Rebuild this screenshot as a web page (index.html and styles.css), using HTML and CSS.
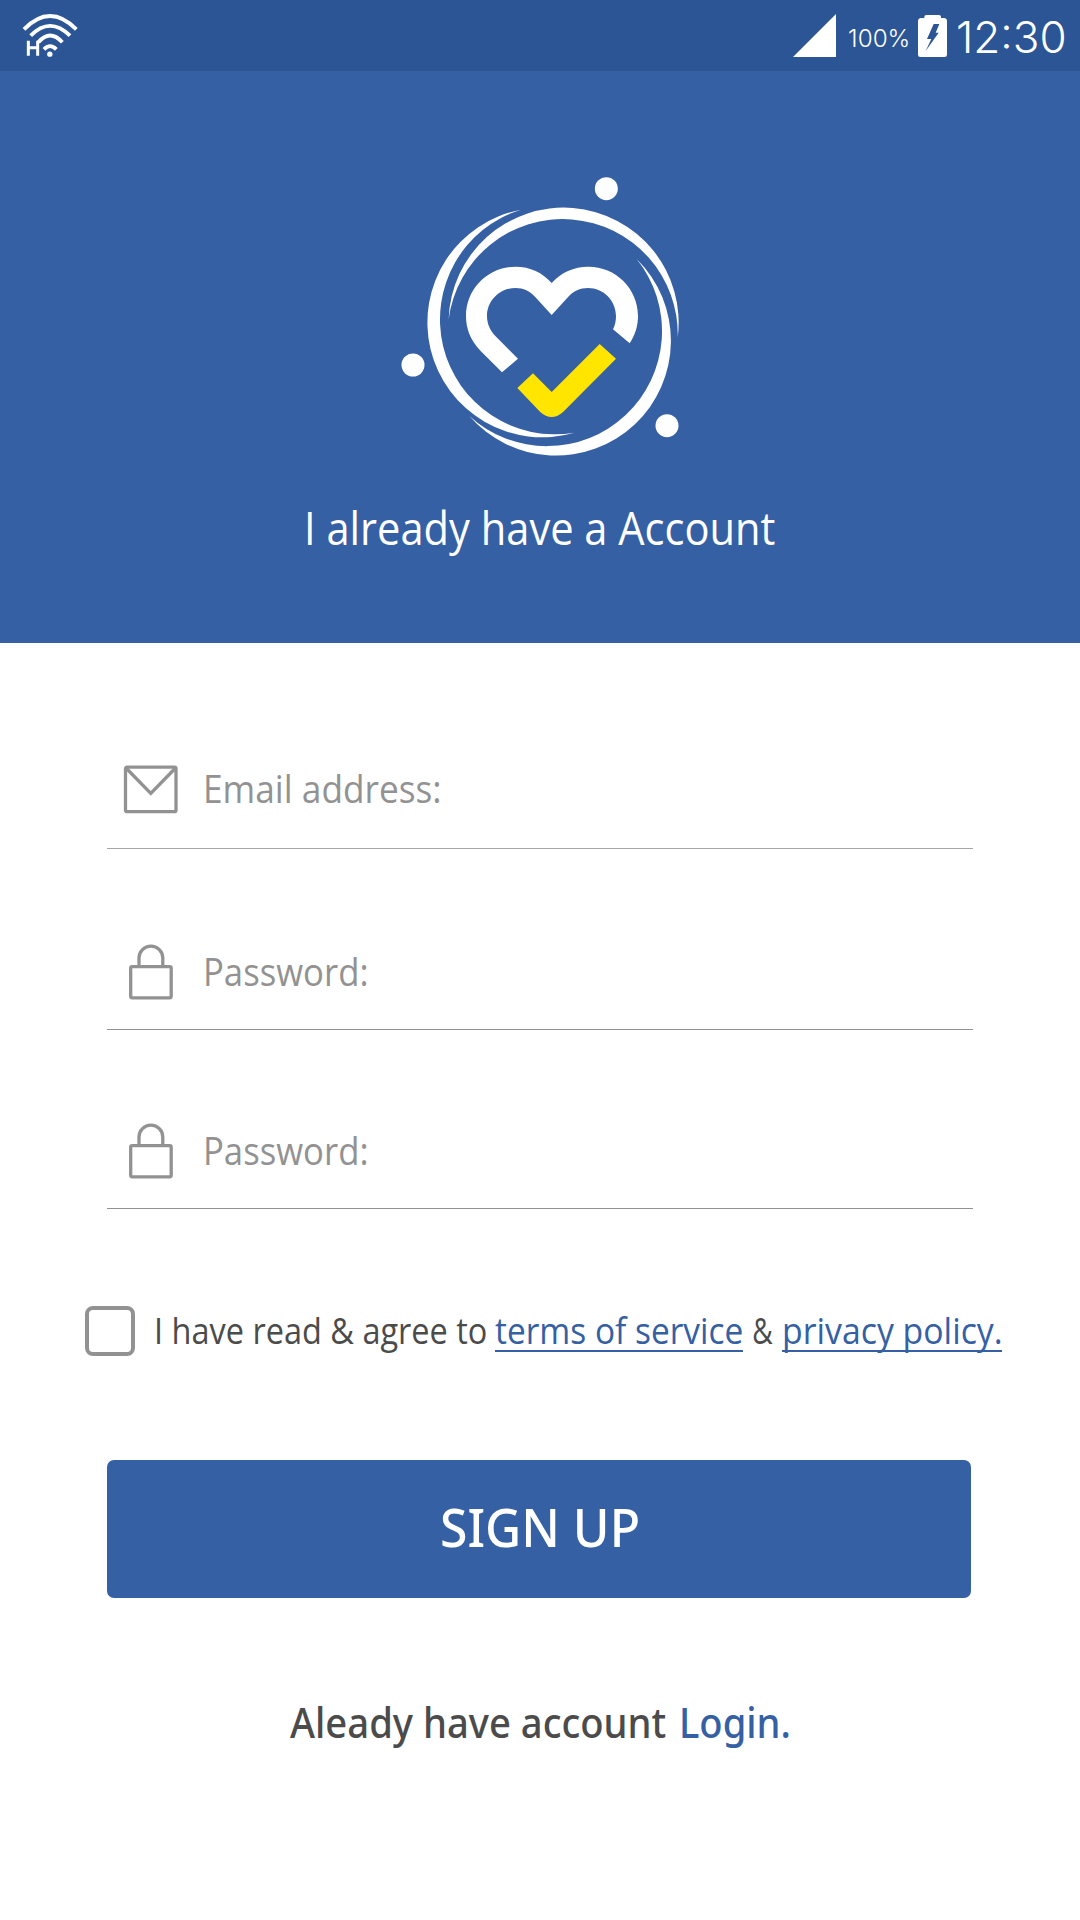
FILE: index.html
```
<!DOCTYPE html>
<html lang="en">
<head>
<meta charset="utf-8">
<title>Sign up</title>
<link rel="stylesheet" href="styles.css">
</head>
<body>
<div class="status">
  <svg class="wifi" viewBox="0 0 180 144" width="60" height="48" fill="none" stroke="#fff">
    <g stroke-width="11.5">
      <path d="M12 58Q90-22 169 58"/>
      <path d="M32 77Q90 18 150 77"/>
      <path d="M55 97Q90 56 127 97"/>
      <path d="M72 118Q90 99 109 118"/>
    </g>
    <path d="M25 92V137M53 92V137M25 113H53" stroke-width="9"/>
    <circle cx="89.500" cy="132.500" r="8" fill="#fff" stroke="none"/>
  </svg>
  <svg class="signal" viewBox="0 0 43 43" width="43" height="43"><path d="M43 0V43H0Z" fill="#fff"/></svg>
  <span class="percent fit">100%</span>
  <svg class="battery" viewBox="0 0 87 126" width="29" height="42">
    <path d="M19 9V5Q19 0 25 0H63Q69 0 69 5V9H78Q87 10 87 18V119Q87 126 80 126H7Q0 126 0 119V18Q0 10 9 9Z" fill="#fff"/>
    <path d="M47 27H64L53 53H62L23 108L40 72H27Z" fill="#2b5594"/>
  </svg>
  <span class="clock fit">12:30</span>
</div>
<header class="hero">
  <svg class="logo" viewBox="0 0 900 930" width="300" height="310" fill="#fff">
    <path d="M176 478A345.050 345.050 0 1 1 863 533A345 345 0 0 0 176 478Z"/>
    <path d="M393 149A344.350 344.350 0 1 0 553 818A344.650 344.650 0 0 1 393 149Z"/>
    <path d="M740 297A344.450 344.450 0 1 1 238 768A345.200 345.200 0 0 0 740 297Z"/>
    <circle cx="649" cy="86" r="34.500"/>
    <circle cx="69" cy="615" r="34.500"/>
    <circle cx="831" cy="797" r="34.500"/>
    <path d="M336 637L272 573C240 540 228 505 228 468C228 385 295 320 377 320C420 320 458 338 485 369C512 338 552 320 595 320C677 320 744 385 744 468C744 498 735 526 719 550L669 508C675 496 678 482 678 468C678 422 641 384 594 384C570 384 550 394 535 410L485 465L435 410C420 394 400 384 377 384C329 384 291 422 291 468C291 492 301 512 316 528L384 596Z"/>
    <path d="M382 684L429 640L485 696L629 552L678 596L520 755Q485 787 450 755Z" fill="#ffe500"/>
  </svg>
  <h1 class="title fit">I already have a Account</h1>
</header>
<main class="form">
  <label class="field email">
    <svg class="icon" viewBox="0 0 60 60" width="60" height="60">
      <rect x="5.500" y="9.200" width="50.500" height="44.500" rx="1.500"/>
      <path d="M6 10L30.800 35.500L55.500 10"/>
    </svg>
    <span class="hint fit">Email address:</span>
  </label>
  <label class="field">
    <svg class="icon" viewBox="0 0 60 60" width="60" height="60">
      <rect x="10.700" y="25.600" width="40.500" height="31.200" rx="1.500"/>
      <path d="M19 25V17A11.900 11.900 0 0 1 42.800 17V25"/>
    </svg>
    <span class="hint pass fit">Password:</span>
  </label>
  <label class="field last">
    <svg class="icon" viewBox="0 0 60 60" width="60" height="60">
      <rect x="10.700" y="25.600" width="40.500" height="31.200" rx="1.500"/>
      <path d="M19 25V17A11.900 11.900 0 0 1 42.800 17V25"/>
    </svg>
    <span class="hint pass fit">Password:</span>
  </label>
  <div class="terms">
    <span class="box"></span>
    <span class="agree fit">I have read &amp; agree to</span>
    <a class="link service"><span class="fit">terms of service</span></a>
    <span class="and fit">&amp;</span>
    <a class="link privacy"><span class="fit">privacy policy.</span></a>
  </div>
  <button class="submit"><span class="fit">SIGN UP</span></button>
  <p class="login"><span class="have fit">Aleady have account</span><a class="go fit">Login.</a></p>
</main>
</body>
</html>
```
FILE: styles.css
```
* { box-sizing: border-box; }
body {
  margin: 0;
  width: 1080px;
  min-height: 1920px;
  background: #fff;
  font-family: "Open Sans", "Noto Sans", sans-serif;
}
svg { display: block; flex: none; }

/* Narrowed lettering; each text sets its own --s ratio */
.fit {
  display: block;
  flex: none;
  white-space: nowrap;
  transform: scaleX(var(--s));
  transform-origin: 0 50%;
}

.status {
  display: flex;
  align-items: flex-start;
  height: 71px;
  background: #2b5594;
  color: #fff;
  font-family: Inter, sans-serif;
  font-weight: 300;
}
.wifi { margin: 10px 0 0 20px; }
.signal { margin: 14px 0 0 713px; }
.percent { --s: 1.010; width: 82px; padding-left: 12px; font-size: 24px; line-height: 78px; }
.battery { margin-top: 15px; }
.clock { --s: 1; margin-left: 9px; font-size: 44px; line-height: 74px; }

.hero {
  display: flex;
  flex-direction: column;
  align-items: flex-start;
  height: 572px;
  padding-top: 89px;
  background: #3560a4;
  color: #fff;
}
.logo { margin-left: 390px; }
.title { --s: .925; margin: 28px 0 0 303.500px; font-size: 45px; font-weight: 400; line-height: 60px; }

.field {
  display: flex;
  align-items: flex-end;
  width: 866px;
  height: 181px;
  margin-left: 107px;
  padding: 0 0 28px 13px;
  border-bottom: 1px solid #929292;
}
.email { height: 206px; padding-bottom: 30px; border-color: #a6a6a6; }
.last { height: 179px; }
.icon { fill: none; stroke: #929292; stroke-width: 3.300; }
.hint { --s: .928; margin-left: 23px; color: #929292; font-size: 38px; line-height: 60px; }
.pass { --s: .913; }

.terms {
  display: flex;
  height: 50px;
  margin-top: 96px;
  padding-left: 85px;
  color: #4b4b4b;
  font-size: 36.500px;
  line-height: 50px;
}
.box { width: 50px; height: 50px; margin-top: 1px; border: 4px solid #929292; border-radius: 8px; }
.agree { --s: .89; width: 341px; margin-left: 19px; }
.link { height: 47px; border-bottom: 2px solid #3560a4; color: #3560a4; }
.service { --s: .916; width: 248px; }
.and { --s: .769; width: 39px; padding-left: 12px; }
.privacy { --s: .926; width: 220px; }

.submit {
  display: block;
  width: 864px;
  height: 138px;
  margin: 105px 0 0 107px;
  padding: 0 0 5px 333px;
  border: 0;
  border-radius: 7px;
  background: #3560a4;
  color: #fff;
  font: 500 53px/133px "Noto Sans", sans-serif;
  text-align: left;
}
.submit .fit { --s: .94; }

.login {
  display: flex;
  margin: 94px 0 0 290px;
  color: #4b4b4b;
  font: 500 42px/60px "Noto Sans", sans-serif;
}
.have { --s: .91; width: 389px; }
.go { --s: .908; color: #3560a4; }
```
